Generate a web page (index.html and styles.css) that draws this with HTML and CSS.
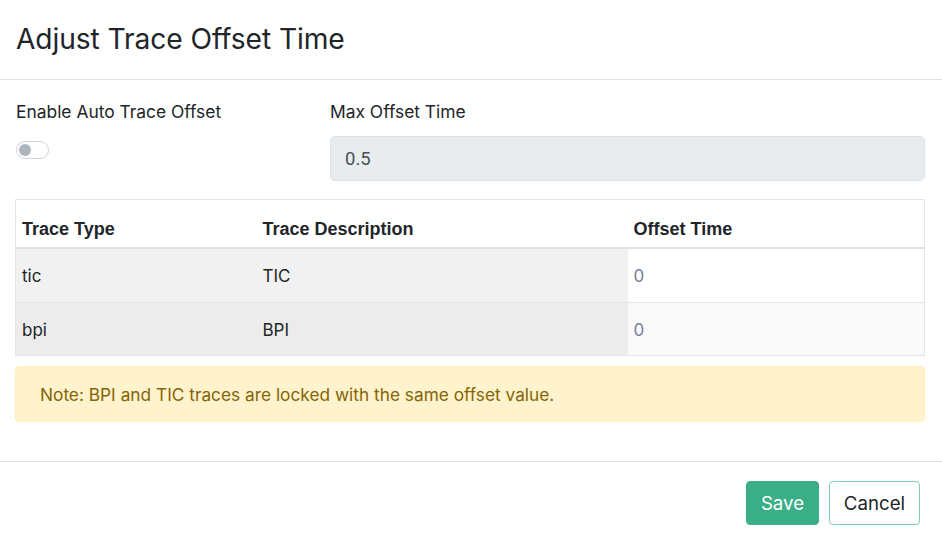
FILE: index.html
```html
<!DOCTYPE html>
<html lang="en">
<head>
    <meta charset="UTF-8">
    <meta name="viewport" content="width=device-width, initial-scale=1.0">
    <title>Adjust Trace Offset Time</title>
    <link rel="stylesheet" href="styles.css">
</head>
<body>
    <div class="modal">
        <header class="modal-header">
            <h1>Adjust Trace Offset Time</h1>
        </header>

        <main class="modal-body">
            <div class="form-row">
                <div class="form-col auto-col">
                    <label class="form-label">Enable Auto Trace Offset</label>
                    <span class="switch"><span class="knob"></span></span>
                </div>
                <div class="form-col max-col">
                    <label class="form-label">Max Offset Time</label>
                    <input class="form-input" type="text" value="0.5" disabled>
                </div>
            </div>

            <table class="trace-table">
                <thead>
                    <tr>
                        <th class="col-type">Trace Type</th>
                        <th class="col-desc">Trace Description</th>
                        <th class="col-offset">Offset Time</th>
                    </tr>
                </thead>
                <tbody>
                    <tr>
                        <td>tic</td>
                        <td>TIC</td>
                        <td class="offset-cell">0</td>
                    </tr>
                    <tr>
                        <td>bpi</td>
                        <td>BPI</td>
                        <td class="offset-cell">0</td>
                    </tr>
                </tbody>
            </table>

            <div class="alert">Note: BPI and TIC traces are locked with the same offset value.</div>
        </main>

        <footer class="modal-footer">
            <button class="btn btn-save">Save</button>
            <button class="btn btn-cancel">Cancel</button>
        </footer>
    </div>
</body>
</html>
```

FILE: styles.css
```css
* {
    margin: 0;
    padding: 0;
    box-sizing: border-box;
}
body {
    font-family: 'Inter', 'Noto Sans', sans-serif;
    background-color: #fff;
    color: #212529;
    width: 942px;
}
.modal-header {
    height: 80px;
    padding: 0 16px;
    display: flex;
    align-items: center;
    border-bottom: 1px solid #dee2e6;
}
.modal-header h1 {
    font-size: 28.2px;
    font-weight: 400;
    color: #212529;
    letter-spacing: -0.1px;
    padding-bottom: 2px;
}
.modal-body {
    padding: 21px 17px 39px 15px;
}
.form-row {
    display: flex;
    gap: 0;
}
.form-col {
    display: flex;
    flex-direction: column;
}
.auto-col {
    width: 316px;
    padding-left: 1px;
}
.max-col {
    flex: 1;
}
.form-label {
    font-size: 17.4px;
    color: #212529;
    line-height: 22px;
    margin-bottom: 13px;
}
.switch {
    position: relative;
    display: block;
    width: 33px;
    height: 18px;
    border: 1px solid #ced4da;
    border-radius: 9px;
    background-color: #fff;
    margin-top: 5px;
}
.knob {
    position: absolute;
    left: 2px;
    top: 2px;
    width: 12px;
    height: 12px;
    border-radius: 50%;
    background-color: #adb5bd;
}
.form-input {
    width: 595px;
    height: 45px;
    border: 1px solid #dee2e6;
    border-radius: 5px;
    background-color: #e9ecef;
    padding: 0 14px;
    font-family: 'Roboto', sans-serif;
    font-size: 18.5px;
    color: #495057;
}
.trace-table {
    width: 910px;
    margin-top: 18px;
    border-collapse: collapse;
    border: 1px solid #e5e5e5;
    font-size: 17px;
}
.trace-table th {
    font-family: 'Liberation Sans', Arial, sans-serif;
    font-weight: bold;
    font-size: 18px;
    text-align: left;
    height: 48px;
    padding: 13px 6px 0 6px;
    border-bottom: 2px solid #dee2e6;
    color: #212529;
}
.trace-table .col-type {
    width: 240px;
}
.trace-table .col-desc {
    width: 372px;
    padding-left: 7px;
}
.trace-table .col-offset {
    padding-left: 6px;
}
.trace-table td {
    padding: 2px 6px 0 6px;
    background-color: #f1f1f1;
    border-bottom: 1px solid #e5e5e5;
}
.trace-table tbody tr:first-child td {
    height: 55px;
}
.trace-table tbody tr:last-child td {
    height: 53px;
    background-color: #ececec;
}
.trace-table td:nth-child(2) {
    padding-left: 7px;
}
.trace-table td.offset-cell {
    background-color: #fff;
    color: #7a7f9a;
    padding-left: 6px;
}
.trace-table tbody tr:last-child td.offset-cell {
    background-color: #fafafa;
}
.alert {
    margin-top: 10px;
    height: 56px;
    padding: 0 24px;
    display: flex;
    align-items: center;
    background-color: #fff3cd;
    border: 1px solid #ffeeba;
    border-radius: 4px;
    color: #856404;
    font-size: 17.3px;
    width: 910px;
}
.modal-footer {
    border-top: 1px solid #dee2e6;
    display: flex;
    justify-content: flex-end;
    gap: 10px;
    padding: 19px 22px 0 0;
}
.btn {
    height: 44px;
    border-radius: 4px;
    font-family: 'Inter', sans-serif;
    font-size: 18.7px;
    cursor: pointer;
}
.btn-save {
    width: 73px;
    background-color: #3aae87;
    border: 1px solid #3aae87;
    color: #fff;
}
.btn-cancel {
    width: 91px;
    background-color: #fff;
    border: 1px solid #7fcdb3;
    color: #212529;
}
```
